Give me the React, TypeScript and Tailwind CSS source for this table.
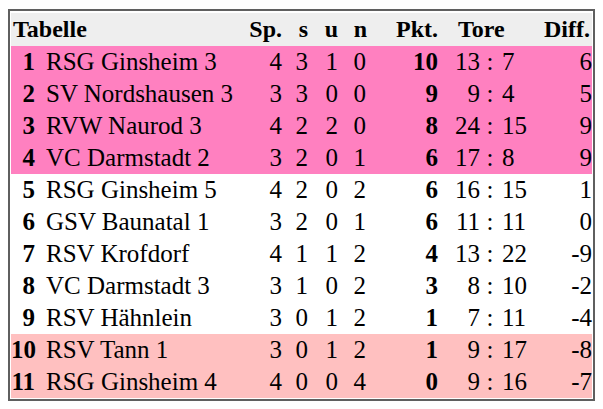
import React from 'react';

// League table data
interface Team {
  rank: number;
  name: string;
  games: number;
  won: number;
  draw: number;
  lost: number;
  points: number;
  goalsFor: number;
  goalsAgainst: number;
  diff: number;
  zone: 'up' | 'mid' | 'down';
}

const teams: Team[] = [
  { rank: 1, name: 'RSG Ginsheim 3', games: 4, won: 3, draw: 1, lost: 0, points: 10, goalsFor: 13, goalsAgainst: 7, diff: 6, zone: 'up' },
  { rank: 2, name: 'SV Nordshausen 3', games: 3, won: 3, draw: 0, lost: 0, points: 9, goalsFor: 9, goalsAgainst: 4, diff: 5, zone: 'up' },
  { rank: 3, name: 'RVW Naurod 3', games: 4, won: 2, draw: 2, lost: 0, points: 8, goalsFor: 24, goalsAgainst: 15, diff: 9, zone: 'up' },
  { rank: 4, name: 'VC Darmstadt 2', games: 3, won: 2, draw: 0, lost: 1, points: 6, goalsFor: 17, goalsAgainst: 8, diff: 9, zone: 'up' },
  { rank: 5, name: 'RSG Ginsheim 5', games: 4, won: 2, draw: 0, lost: 2, points: 6, goalsFor: 16, goalsAgainst: 15, diff: 1, zone: 'mid' },
  { rank: 6, name: 'GSV Baunatal 1', games: 3, won: 2, draw: 0, lost: 1, points: 6, goalsFor: 11, goalsAgainst: 11, diff: 0, zone: 'mid' },
  { rank: 7, name: 'RSV Krofdorf', games: 4, won: 1, draw: 1, lost: 2, points: 4, goalsFor: 13, goalsAgainst: 22, diff: -9, zone: 'mid' },
  { rank: 8, name: 'VC Darmstadt 3', games: 3, won: 1, draw: 0, lost: 2, points: 3, goalsFor: 8, goalsAgainst: 10, diff: -2, zone: 'mid' },
  { rank: 9, name: 'RSV Hähnlein', games: 3, won: 0, draw: 1, lost: 2, points: 1, goalsFor: 7, goalsAgainst: 11, diff: -4, zone: 'mid' },
  { rank: 10, name: 'RSV Tann 1', games: 3, won: 0, draw: 1, lost: 2, points: 1, goalsFor: 9, goalsAgainst: 17, diff: -8, zone: 'down' },
  { rank: 11, name: 'RSG Ginsheim 4', games: 4, won: 0, draw: 0, lost: 4, points: 0, goalsFor: 9, goalsAgainst: 16, diff: -7, zone: 'down' },
];

const zoneBg = {
  up: 'bg-[#ff80c0]',
  mid: 'bg-white',
  down: 'bg-[#ffc0c0]',
};

// rank | name | Sp. | s | u | n | Pkt. | goals : goals | Diff.
const cols = 'grid grid-cols-[27px_202px_44px_26px_30px_28px_72px_40px_20px_40px_1fr]';

export default function App() {
  return (
    <div className="min-h-screen bg-white pl-[8px] pt-[9px] font-['Liberation_Serif','Times_New_Roman',serif] text-black">
      <div className="w-[587px] border-2 border-[#5f5f5f] px-px pt-[2px] pb-px">
        {/* Header */}
        <div className={`${cols} h-[33px] items-center bg-[#eeeeee] text-[24px] font-bold leading-[33px]`}>
          <div className="col-span-2 pl-[2px]">Tabelle</div>
          <div className="pr-[2px] text-right">Sp.</div>
          <div className="pr-[2px] text-right">s</div>
          <div className="pr-[2px] text-right">u</div>
          <div className="pr-px text-right">n</div>
          <div className="pr-[2px] text-right">Pkt.</div>
          <div className="col-span-3 pl-[18px]">Tore</div>
          <div className="pr-[2px] text-right">Diff.</div>
        </div>

        {/* Rows */}
        {teams.map((t) => (
          <div key={t.rank} className={`${cols} h-[32px] items-center text-[25px] leading-[32px] ${zoneBg[t.zone]}`}>
            <div className="pr-[3px] text-right font-bold">{t.rank}</div>
            <div className="whitespace-nowrap pl-[8px]">{t.name}</div>
            <div className="pr-[2px] text-right">{t.games}</div>
            <div className="pr-[2px] text-right">{t.won}</div>
            <div className="pr-[2px] text-right">{t.draw}</div>
            <div className="pr-[2px] text-right">{t.lost}</div>
            <div className="pr-[2px] text-right font-bold">{t.points}</div>
            <div className="text-right">{t.goalsFor}</div>
            <div className="text-center">:</div>
            <div className="pl-[2px]">{t.goalsAgainst}</div>
            <div className="text-right">{t.diff}</div>
          </div>
        ))}
      </div>
    </div>
  );
}
